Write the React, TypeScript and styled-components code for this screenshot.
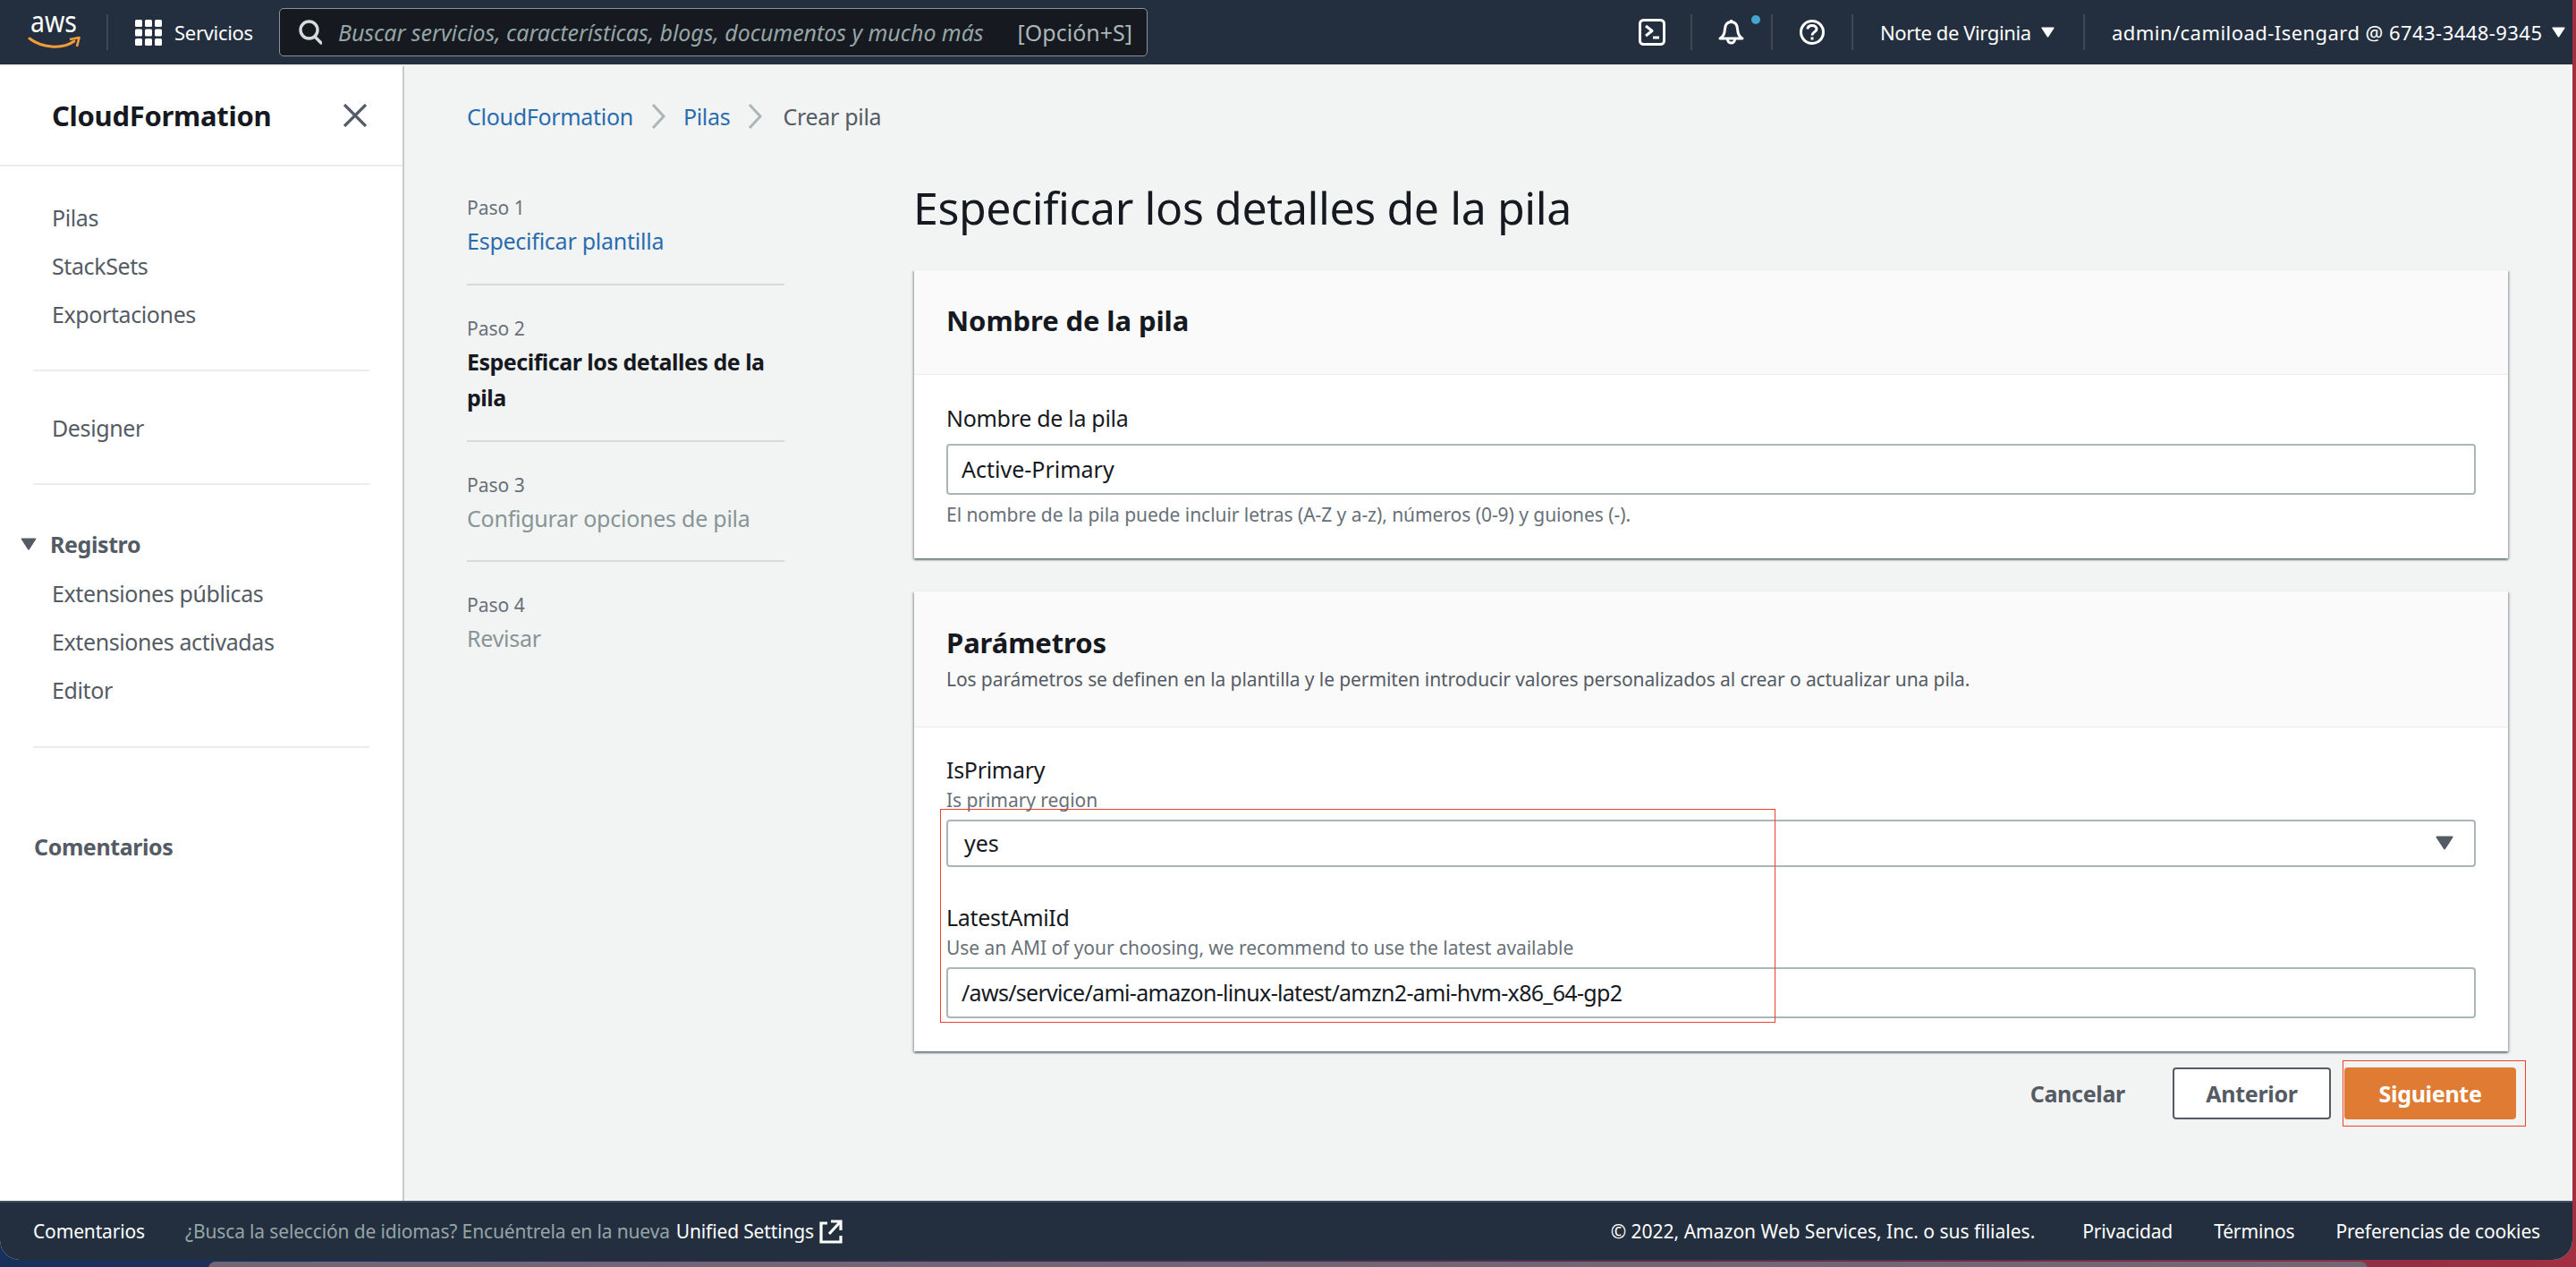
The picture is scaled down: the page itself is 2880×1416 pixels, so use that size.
import styled, { createGlobalStyle } from "styled-components";

const FONT = `"Noto Sans", "Open Sans", "Liberation Sans", sans-serif`;

const GlobalStyle = createGlobalStyle`
  html, body {
    margin: 0;
    padding: 0;
    background: #2a2a3a;
  }
  * {
    box-sizing: border-box;
  }
`;

const Desktop = styled.div`
  position: relative;
  width: 2880px;
  height: 1416px;
  overflow: hidden;
  font-family: ${FONT};
  background: linear-gradient(90deg, #17305c 0%, #2c2a55 30%, #6b2c50 75%, #a32f3f 100%);
`;

const Window = styled.div`
  width: 2876px;
  height: 1408px;
  display: flex;
  flex-direction: column;
  border-radius: 0 0 22px 22px;
  overflow: hidden;
  background: #f2f3f3;
`;

const BehindWindow = styled.div`
  width: 2414px;
  height: 8px;
  margin: 2px 0 0 233px;
  background: #6f6774;
  border-radius: 18px 18px 0 0;
`;

/* top bar */
const TopBar = styled.header`
  flex: none;
  height: 74px;
  display: flex;
  align-items: center;
  background: #232f3e;
  border-bottom: 2px solid #eef0f0;
  color: #fff;
  font-size: 22px;
`;

const LogoSlot = styled.div`
  width: 119px;
  height: 72px;
  display: flex;
  justify-content: flex-end;
  padding-right: 28px;
`;

const BarDivider = styled.span`
  flex: none;
  width: 2px;
  height: 40px;
  background: #414750;
`;

const ServicesButton = styled.div`
  display: flex;
  align-items: center;
  gap: 14px;
  margin-left: 30px;
  width: 161px;
  letter-spacing: -0.3px;
`;

const SearchBox = styled.div`
  width: 971px;
  height: 54px;
  display: flex;
  align-items: center;
  background: #16191f;
  border: 1px solid #879596;
  border-radius: 5px;
  padding: 0 16px 0 21px;
  color: #aab7b8;
  font-size: 25px;
`;

const SearchText = styled.span`
  margin-left: 18px;
  flex: 1;
  font-style: italic;
  letter-spacing: -0.06px;
  color: #95a5a6;
`;

const SearchKey = styled.span`
  color: #aab7b8;
`;

const BarSpacer = styled.div`
  flex: 1;
`;

const IconSlot = styled.div<{ $width: number }>`
  position: relative;
  width: ${(p) => p.$width}px;
  display: flex;
  justify-content: center;
`;

const NotifyDot = styled.span`
  position: absolute;
  top: -4px;
  right: 12px;
  width: 10px;
  height: 10px;
  border-radius: 50%;
  background: #44a5d0;
`;

const MenuLabel = styled.div<{ $width: number; $spacing: number }>`
  flex: none;
  width: ${(p) => p.$width}px;
  padding-left: 30px;
  display: flex;
  align-items: center;
  gap: 11px;
  white-space: nowrap;
  letter-spacing: ${(p) => p.$spacing}px;
`;

/* layout */
const Body = styled.div`
  flex: 1;
  min-height: 0;
  display: flex;
`;

const Sidebar = styled.nav`
  flex: none;
  width: 452px;
  background: #fff;
  border-right: 2px solid #c6cbcc;
  color: #545b64;
  font-size: 25px;
  letter-spacing: -0.4px;
`;

const SideHeader = styled.div`
  height: 112px;
  display: flex;
  align-items: center;
  justify-content: space-between;
  padding: 0 39px 0 58px;
  border-bottom: 2px solid #eaeded;
  color: #16191f;
  font-size: 31px;
  font-weight: 700;
  letter-spacing: -0.3px;
`;

const SideGroup = styled.div<{ $top: number; $bottom: number }>`
  margin: 0 37px;
  padding: ${(p) => p.$top}px 0 ${(p) => p.$bottom}px;
  border-bottom: 2px solid #eaeded;
`;

const SideLink = styled.div`
  height: 54px;
  line-height: 54px;
  padding-left: 21px;
`;

const SideTitle = styled.div`
  height: 57px;
  display: flex;
  align-items: center;
  gap: 15px;
  margin-left: -14px;
  font-weight: 700;
`;

const SideFooter = styled.div`
  margin: 83px 0 0 38px;
  line-height: 54px;
  font-weight: 700;
`;

const Main = styled.main`
  flex: 1;
  min-width: 0;
  padding: 38px 0 0 70px;
`;

const Crumbs = styled.div`
  height: 36px;
  display: flex;
  align-items: center;
  gap: 20px;
  margin-bottom: 53px;
  font-size: 25px;
  letter-spacing: -0.3px;
  color: #545b64;
`;

const LinkText = styled.span`
  color: #2a6cb0;
`;

const CurrentCrumb = styled.span`
  margin-left: 3px;
`;

const Columns = styled.div`
  display: flex;
  gap: 145px;
`;

const Steps = styled.ol`
  flex: none;
  width: 355px;
  margin: 0;
  padding: 16px 0 0;
  list-style: none;
`;

const Step = styled.li`
  padding: 33px 0 27.5px;
  border-bottom: 2px solid #d5dbdb;
  &:first-child {
    padding: 0 0 28px;
  }
  &:last-child {
    border-bottom: 0;
  }
`;

const StepNumber = styled.div`
  height: 30px;
  line-height: 30px;
  margin-bottom: 2px;
  font-size: 21px;
  color: #687078;
`;

const StepName = styled.div<{ $state: "done" | "current" | "todo" }>`
  line-height: 40px;
  font-size: 25px;
  font-weight: ${(p) => (p.$state === "current" ? 700 : 400)};
  letter-spacing: ${(p) => (p.$state === "current" ? -0.5 : -0.25)}px;
  color: ${(p) =>
    p.$state === "done" ? "#2a6cb0" : p.$state === "current" ? "#16191f" : "#879596"};
`;

const Content = styled.div`
  width: 1782px;
`;

const PageTitle = styled.h1`
  margin: 0 0 37px -1px;
  height: 64px;
  line-height: 62px;
  font-size: 50px;
  font-weight: 400;
  letter-spacing: -0.4px;
  color: #16191f;
`;

const Panel = styled.section`
  margin-bottom: 37px;
  background: #fff;
  box-shadow: 0 2px 2px rgba(0, 28, 36, 0.45), 2px 1px 2px rgba(0, 28, 36, 0.18),
    -2px 1px 2px rgba(0, 28, 36, 0.18);
  &:last-of-type {
    margin-bottom: 0;
  }
`;

const PanelHead = styled.div<{ $tall?: boolean }>`
  padding: ${(p) => (p.$tall ? "35px 36px 38px" : "34px 36px 38px")};
  background: #fafafa;
  border-bottom: 1px solid #eaeded;
`;

const PanelTitle = styled.h2`
  margin: 0;
  height: 44px;
  line-height: 44px;
  font-size: 31px;
  font-weight: 700;
  letter-spacing: -0.1px;
  color: #16191f;
`;

const PanelDesc = styled.p`
  margin: 4px 0 0;
  line-height: 30px;
  font-size: 21px;
  letter-spacing: -0.09px;
  color: #545b64;
`;

const PanelBody = styled.div<{ $top: number; $bottom: number }>`
  padding: ${(p) => p.$top}px 36px ${(p) => p.$bottom}px 36px;
`;

const FieldLabel = styled.div<{ $gapTop?: number }>`
  height: 36px;
  line-height: 34px;
  margin-top: ${(p) => p.$gapTop ?? 0}px;
  font-size: 25px;
  letter-spacing: -0.3px;
  color: #16191f;
`;

const FieldHint = styled.div<{ $gapTop?: number }>`
  height: 30px;
  line-height: 30px;
  margin-top: ${(p) => p.$gapTop ?? 0}px;
  font-size: 21px;
  letter-spacing: -0.05px;
  color: #687078;
`;

const Control = styled.div<{ $height: number; $inset: number; $top: number; $tight?: boolean }>`
  height: ${(p) => p.$height}px;
  margin-top: ${(p) => p.$top}px;
  padding: 0 23px 2px ${(p) => p.$inset}px;
  display: flex;
  align-items: center;
  justify-content: space-between;
  border: 2px solid #aab7b8;
  border-radius: 4px;
  background: #fff;
  font-size: 25px;
  letter-spacing: ${(p) => (p.$tight ? -0.7 : 0)}px;
  color: #16191f;
`;

const Actions = styled.div`
  margin: 18px -9px 0 0;
  display: flex;
  align-items: center;
  justify-content: flex-end;
  font-size: 25px;
  font-weight: 700;
  letter-spacing: -0.3px;
  color: #545b64;
`;

const TextButton = styled.div`
  margin-right: 53px;
`;

const OutlineButton = styled.div`
  width: 177px;
  height: 58px;
  margin-right: 15px;
  display: flex;
  align-items: center;
  justify-content: center;
  background: #fff;
  border: 2px solid #545b64;
  border-radius: 4px;
`;

const PrimaryButton = styled.div`
  width: 192px;
  height: 58px;
  display: flex;
  align-items: center;
  justify-content: center;
  background: #e07b33;
  border-radius: 4px;
  color: #fff;
`;

const Highlight = styled.div<{ $left: number; $top: number; $w: number; $h: number }>`
  position: absolute;
  left: ${(p) => p.$left}px;
  top: ${(p) => p.$top}px;
  width: ${(p) => p.$w}px;
  height: ${(p) => p.$h}px;
  border: 1px solid #f0402c;
  pointer-events: none;
`;

/* footer */
const Footer = styled.footer`
  flex: none;
  height: 66px;
  display: flex;
  align-items: center;
  padding: 0 36px 0 37px;
  background: #232f3e;
  border-top: 2px solid #414d5c;
  color: #fff;
  font-size: 21px;
  letter-spacing: -0.15px;
  white-space: nowrap;
`;

const FooterNote = styled.span`
  margin-left: 45px;
  color: #95a5a6;
`;

const FooterStrong = styled.span`
  margin-left: 7px;
  color: #fff;
`;

const FooterIcon = styled.span`
  margin-left: 6px;
  display: flex;
`;

const FooterLinks = styled.div`
  margin-left: auto;
  display: flex;
  gap: 46px;
`;

const Copyright = styled.span`
  margin-right: 7px;
  letter-spacing: 0;
`;

const AwsLogo = () => (
  <svg width="60" height="72" viewBox="31 0 60 72">
    <text x="34" y="36" fontFamily={FONT} fontSize="32" fill="#fff" textLength="52" lengthAdjust="spacingAndGlyphs">
      aws
    </text>
    <path d="M33 43 C46 53 69 56 83 46" fill="none" stroke="#f29d38" strokeWidth="3" strokeLinecap="round" />
    <path d="M78 44 L88.5 42 L86 52" fill="none" stroke="#f29d38" strokeWidth="2.6" strokeLinejoin="round" />
  </svg>
);

const GridIcon = () => (
  <svg width="30" height="29" viewBox="0 0 30 29" fill="#fff">
    {[0, 10.5, 21].map((y) =>
      [0, 11, 22].map((x) => <rect key={`${x}-${y}`} x={x} y={y} width="8" height="8" rx="1.5" />),
    )}
  </svg>
);

const SearchIcon = () => (
  <svg width="26" height="28" viewBox="0 0 26 28" fill="none" stroke="#d5dbdb" strokeWidth="3.4">
    <circle cx="11.5" cy="11.5" r="9.5" />
    <path d="M18 19 L25 26" strokeLinecap="round" />
  </svg>
);

const ShellIcon = () => (
  <svg width="30" height="30" viewBox="0 0 30 30" fill="none" stroke="#fff" strokeWidth="3">
    <rect x="1.5" y="1.5" width="27" height="27" rx="4" />
    <path d="M8 8 L15 13.5 L8 19" strokeLinejoin="round" />
    <path d="M16 21 H23" />
  </svg>
);

const BellIcon = () => (
  <svg width="30" height="30" viewBox="0 0 30 30" fill="none" stroke="#fff" strokeWidth="3">
    <path d="M2 22 C7 19 7 15 7.5 11 C8 6 11 3.5 14.5 3.5 C18 3.5 21 6 21.5 11 C22 15 22 19 27 22 Z" strokeLinejoin="round" />
    <path d="M14.5 1 V4" />
    <path d="M10.5 23 A4 4 0 0 0 18.5 23" />
  </svg>
);

const HelpIcon = () => (
  <svg width="30" height="30" viewBox="0 0 30 30" fill="none" stroke="#fff" strokeWidth="3">
    <circle cx="15" cy="15" r="12.5" />
    <path d="M10 11.5 C10 8.5 12.5 7.5 15 7.5 C18 7.5 20 9.2 20 11.5 C20 14.5 15 14.8 15 18.5" />
    <path d="M15 20.5 V23.5" />
  </svg>
);

const Caret = ({ size = 15, color = "#fff" }: { size?: number; color?: string }) => (
  <svg width={size} height={Math.round(size * 0.8)} viewBox="0 0 20 16">
    <path d="M1.5 1.5 H18.5 L10 14.5 Z" fill={color} stroke={color} strokeWidth="2" strokeLinejoin="round" />
  </svg>
);

const CloseIcon = () => (
  <svg width="28" height="26" viewBox="0 0 28 26" fill="none" stroke="#545b64" strokeWidth="3.2">
    <path d="M2 1 L26 25 M26 1 L2 25" />
  </svg>
);

const Chevron = () => (
  <svg width="16" height="28" viewBox="0 0 16 28" fill="none" stroke="#aab7b8" strokeWidth="3">
    <path d="M2 1 L14 14 L2 27" />
  </svg>
);

const ExternalIcon = () => (
  <svg width="26" height="28" viewBox="0 0 26 28" fill="none" stroke="#fff" strokeWidth="3.2">
    <path d="M9 5 H2 V26 H24 V19" />
    <path d="M11 17 L23 4 M13 3 H24 V13" />
  </svg>
);

export default function App(): React.ReactElement {
  return (
    <Desktop>
      <GlobalStyle />
      <Window>
        <TopBar>
          <LogoSlot>
            <AwsLogo />
          </LogoSlot>
          <BarDivider />
          <ServicesButton>
            <GridIcon />
            Servicios
          </ServicesButton>
          <SearchBox>
            <SearchIcon />
            <SearchText>Buscar servicios, características, blogs, documentos y mucho más</SearchText>
            <SearchKey>[Opción+S]</SearchKey>
          </SearchBox>
          <BarSpacer />
          <IconSlot $width={87}>
            <ShellIcon />
          </IconSlot>
          <BarDivider />
          <IconSlot $width={88}>
            <BellIcon />
            <NotifyDot />
          </IconSlot>
          <BarDivider />
          <IconSlot $width={88}>
            <HelpIcon />
          </IconSlot>
          <BarDivider />
          <MenuLabel $width={257} $spacing={-0.4}>
            Norte de Virginia
            <Caret />
          </MenuLabel>
          <BarDivider />
          <MenuLabel $width={545} $spacing={0.45}>
            admin/camiload-Isengard @ 6743-3448-9345
            <Caret />
          </MenuLabel>
        </TopBar>

        <Body>
          <Sidebar>
            <SideHeader>
              CloudFormation
              <CloseIcon />
            </SideHeader>
            <SideGroup $top={30} $bottom={35}>
              <SideLink>Pilas</SideLink>
              <SideLink>StackSets</SideLink>
              <SideLink>Exportaciones</SideLink>
            </SideGroup>
            <SideGroup $top={36} $bottom={35}>
              <SideLink>Designer</SideLink>
            </SideGroup>
            <SideGroup $top={37} $bottom={36}>
              <SideTitle>
                <Caret size={18} color="#545b64" />
                Registro
              </SideTitle>
              <SideLink>Extensiones públicas</SideLink>
              <SideLink>Extensiones activadas</SideLink>
              <SideLink>Editor</SideLink>
            </SideGroup>
            <SideFooter>Comentarios</SideFooter>
          </Sidebar>

          <Main>
            <Crumbs>
              <LinkText>CloudFormation</LinkText>
              <Chevron />
              <LinkText>Pilas</LinkText>
              <Chevron />
              <CurrentCrumb>Crear pila</CurrentCrumb>
            </Crumbs>
            <Columns>
              <Steps>
                <Step>
                  <StepNumber>Paso 1</StepNumber>
                  <StepName $state="done">Especificar plantilla</StepName>
                </Step>
                <Step>
                  <StepNumber>Paso 2</StepNumber>
                  <StepName $state="current">Especificar los detalles de la pila</StepName>
                </Step>
                <Step>
                  <StepNumber>Paso 3</StepNumber>
                  <StepName $state="todo">Configurar opciones de pila</StepName>
                </Step>
                <Step>
                  <StepNumber>Paso 4</StepNumber>
                  <StepName $state="todo">Revisar</StepName>
                </Step>
              </Steps>

              <Content>
                <PageTitle>Especificar los detalles de la pila</PageTitle>
                <Panel>
                  <PanelHead>
                    <PanelTitle>Nombre de la pila</PanelTitle>
                  </PanelHead>
                  <PanelBody $top={31} $bottom={34}>
                    <FieldLabel>Nombre de la pila</FieldLabel>
                    <Control $height={57} $inset={15} $top={10}>
                      Active-Primary
                    </Control>
                    <FieldHint $gapTop={7}>
                      El nombre de la pila puede incluir letras (A-Z y a-z), números (0-9) y guiones (-).
                    </FieldHint>
                  </PanelBody>
                </Panel>
                <Panel>
                  <PanelHead $tall>
                    <PanelTitle>Parámetros</PanelTitle>
                    <PanelDesc>
                      Los parámetros se definen en la plantilla y le permiten introducir valores personalizados al crear o actualizar una pila.
                    </PanelDesc>
                  </PanelHead>
                  <PanelBody $top={30} $bottom={37}>
                    <FieldLabel>IsPrimary</FieldLabel>
                    <FieldHint>Is primary region</FieldHint>
                    <Control $height={53} $inset={18} $top={7}>
                      yes
                      <Caret size={20} color="#545b64" />
                    </Control>
                    <FieldLabel $gapTop={39}>LatestAmiId</FieldLabel>
                    <FieldHint>Use an AMI of your choosing, we recommend to use the latest available</FieldHint>
                    <Control $height={57} $inset={15} $top={7} $tight>
                      /aws/service/ami-amazon-linux-latest/amzn2-ami-hvm-x86_64-gp2
                    </Control>
                  </PanelBody>
                </Panel>
                <Actions>
                  <TextButton>Cancelar</TextButton>
                  <OutlineButton>Anterior</OutlineButton>
                  <PrimaryButton>Siguiente</PrimaryButton>
                </Actions>
              </Content>
            </Columns>
          </Main>
        </Body>

        <Footer>
          Comentarios
          <FooterNote>¿Busca la selección de idiomas? Encuéntrela en la nueva</FooterNote>
          <FooterStrong>Unified Settings</FooterStrong>
          <FooterIcon>
            <ExternalIcon />
          </FooterIcon>
          <FooterLinks>
            <Copyright>© 2022, Amazon Web Services, Inc. o sus filiales.</Copyright>
            <span>Privacidad</span>
            <span>Términos</span>
            <span>Preferencias de cookies</span>
          </FooterLinks>
        </Footer>
      </Window>
      <BehindWindow />
      <Highlight $left={1051} $top={904} $w={934} $h={239} />
      <Highlight $left={2619} $top={1185} $w={205} $h={74} />
    </Desktop>
  );
}
